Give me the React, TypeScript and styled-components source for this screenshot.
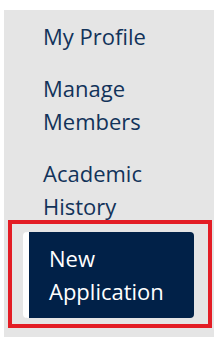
import styled, { createGlobalStyle } from 'styled-components'

const GlobalStyle = createGlobalStyle`
  html, body {
    margin: 0;
    padding: 0;
    background: #ffffff;
    font-family: "Open Sans", "Liberation Sans", sans-serif;
  }
`

const Page = styled.div`
  padding: 10px 8px 0 4px;
  min-height: 100vh;
  box-sizing: border-box;
  display: flex;
  overflow: hidden;
`

const Sidebar = styled.nav`
  width: 210px;
  min-height: calc(100vh - 10px);
  background: #e5e5e5;
`

const Menu = styled.ul`
  list-style: none;
  margin: 0;
  padding: 0;
`

const Item = styled.li<{ $active?: boolean }>`
  position: relative;
  margin: 0 20px 0 19px;
  padding: ${p => (p.$active ? '0' : '9.5px 0')};

  ${p =>
    p.$active &&
    `
    &::after {
      content: '';
      position: absolute;
      top: -12px;
      right: -18px;
      bottom: -10px;
      left: -15px;
      border: 4px solid #e31d25;
      pointer-events: none;
    }
  `}
`

const Link = styled.a<{ $active?: boolean }>`
  display: block;
  font-size: 22px;
  line-height: 33px;
  text-decoration: none;
  color: ${p => (p.$active ? '#ffffff' : '#12335a')};
  background: ${p => (p.$active ? '#012148' : 'transparent')};
  border-left: ${p => (p.$active ? '6px solid #ffffff' : 'none')};
  border-radius: ${p => (p.$active ? '4px' : '0')};
  padding: ${p => (p.$active ? '10px 20px' : '0 20px')};
`

const items = [
  { label: 'My Profile' },
  { label: 'Manage Members' },
  { label: 'Academic History' },
  { label: 'New Application', active: true },
  { label: 'Applications' },
]

function App() {
  return (
    <>
      <GlobalStyle />
      <Page>
        <Sidebar>
          <Menu>
            {items.map(item => (
              <Item key={item.label} $active={item.active}>
                <Link href="#" $active={item.active}>
                  {item.label}
                </Link>
              </Item>
            ))}
          </Menu>
        </Sidebar>
      </Page>
    </>
  )
}

export default App
